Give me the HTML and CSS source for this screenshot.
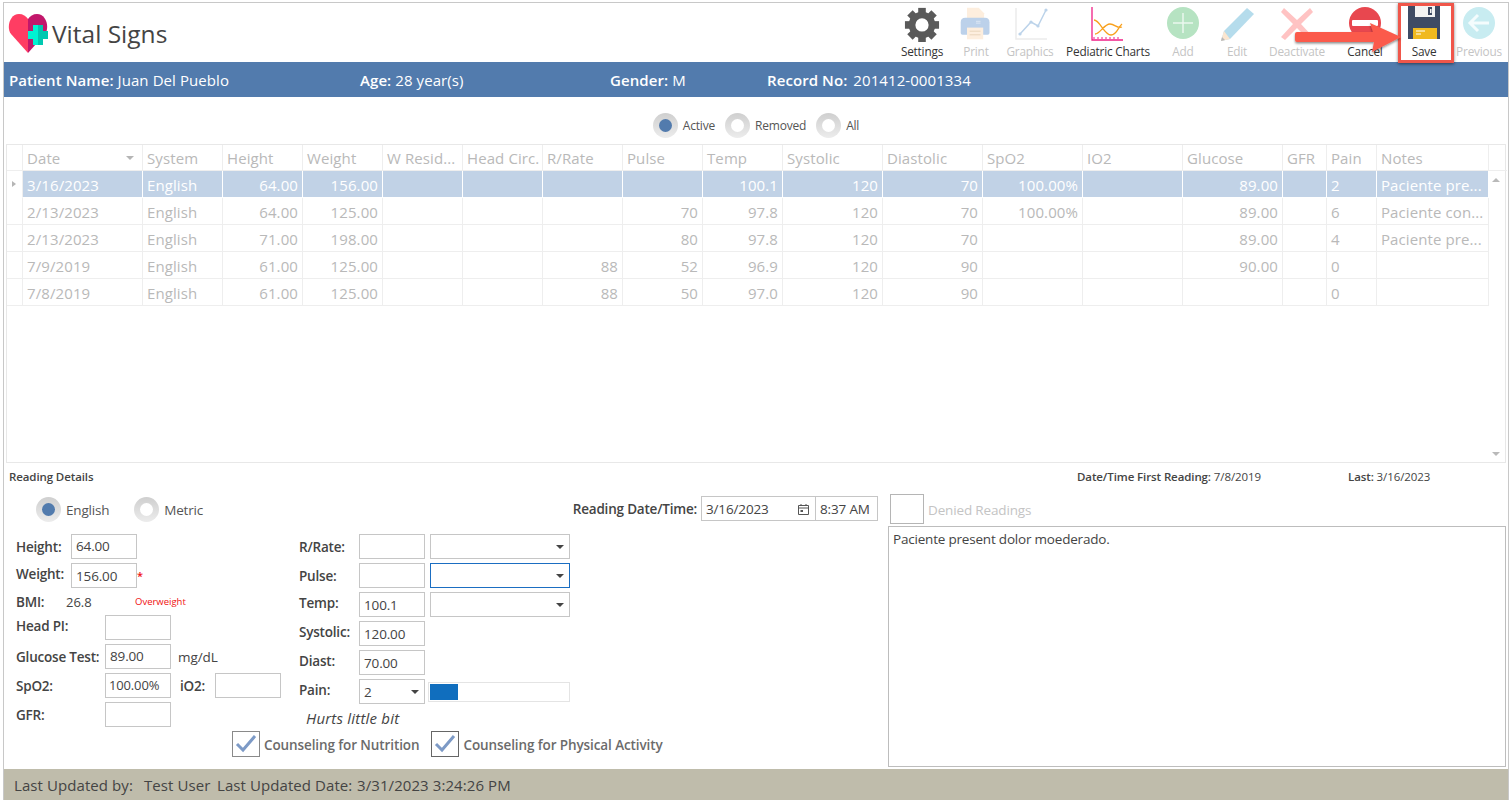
FILE: index.html
```html
<!DOCTYPE html>
<html lang="en">
<head>
<meta charset="utf-8">
<title>Vital Signs</title>
<link rel="stylesheet" href="styles.css">
</head>
<body>
<div class="frame">
  <header class="toolbar">
    <div class="brand">
      <svg class="logo" width="41" height="40" viewBox="0 0 41 40">
        <path d="M20 39 L3 20 C-2 13 2 0 11 0 C15 0 18 2 20 5 Z" fill="#ff3d63"/>
        <path d="M20 39 L37 20 C42 13 38 0 29 0 C25 0 22 2 20 5 Z" fill="#c2176b"/>
        <path d="M30 11h-5v6h-5v8h5v6h5z" fill="#00f2d2"/>
        <path d="M30 11h5v6h5v8h-5v6h-5z" fill="#00c9b1"/>
      </svg>
      <h1 class="title">Vital Signs</h1>
    </div>
    <nav class="tools">
      <div class="tool dark w54">
        <svg width="36" height="36" viewBox="-1 -2 38 38"><g fill="#5a5a5a"><rect x="14" y="0" width="8" height="7"/><rect x="14" y="29" width="8" height="7"/><rect x="0" y="14" width="7" height="8"/><rect x="29" y="14" width="7" height="8"/><rect x="14" y="0" width="8" height="7" transform="rotate(45 18 18)"/><rect x="14" y="29" width="8" height="7" transform="rotate(45 18 18)"/><rect x="0" y="14" width="7" height="8" transform="rotate(45 18 18)"/><rect x="29" y="14" width="7" height="8" transform="rotate(45 18 18)"/></g><circle cx="18" cy="18" r="10.5" fill="none" stroke="#5a5a5a" stroke-width="7"/></svg>
        <span>Settings</span>
      </div>
      <div class="tool w54">
        <svg width="36" height="36" viewBox="-1 -1 40 40"><path d="M9 1h13l6 6v9H9z" fill="#fdeede"/><path d="M2 17q0-5 5-5h22q5 0 5 5v12q0 2-2 2H4q-2 0-2-2z" fill="#bcd1ea"/><rect x="9" y="23" width="18" height="13" fill="#fdeede"/><path d="M12 27h12M12 31h12" stroke="#e8d3b8"/><path d="M19 16h5M19 18h5" stroke="#dfe9f5"/></svg>
        <span>Print</span>
      </div>
      <div class="tool w54">
        <svg width="36" height="36" viewBox="0 1 36 36"><path d="M4 3v31h31" fill="none" stroke="#ececec" stroke-width="1.5"/><path d="M8 29l11-12 7 4 8-16" fill="none" stroke="#bcd3ea" stroke-width="1.5"/><g fill="#bcd3ea"><circle cx="8" cy="29" r="1.6"/><circle cx="19" cy="17" r="1.6"/><circle cx="26" cy="21" r="1.6"/><circle cx="34" cy="5" r="1.6"/></g></svg>
        <span>Graphics</span>
      </div>
      <div class="tool dark w94">
        <svg width="36" height="36" viewBox="0 1 36 36"><path d="M2 2v33h31" fill="none" stroke="#f01f86" stroke-width="1.3"/><path d="M4 32v2M8 32v2M12 32v2M16 32v2M20 32v2M24 32v2M28 32v2" stroke="#f01f86"/><path d="M4 15c6 0 10 15 17 15 6 0 7-8 11-11M5 29c5 0 9-10 15-10 5 0 7 5 12 3" fill="none" stroke="#f8a01c" stroke-width="1.3"/></svg>
        <span>Pediatric Charts</span>
      </div>
      <div class="tool w54 gap1">
        <svg width="36" height="36" viewBox="0 1 36 36"><circle cx="18" cy="18" r="16" fill="#b6e3c2"/><path d="M18 8v20M8 18h20" stroke="#eaf8ee" stroke-width="1.5"/></svg>
        <span>Add</span>
      </div>
      <div class="tool w54">
        <svg width="36" height="36" viewBox="0 0 36 36"><path d="M28 2l7 6-24 25-9 2 3-10z" fill="#b5dcec"/><path d="M5 25l6 8-9 2z" fill="#fbe6d0"/><path d="M2 35l1-4 3 3z" fill="#b9b9b9"/></svg>
        <span>Edit</span>
      </div>
      <div class="tool w66">
        <svg width="36" height="36" viewBox="0 1 36 36"><path d="M5 3l13 12L31 3l3 4-12 12 12 13-4 3-12-12L6 35l-4-3 12-13L2 7z" fill="#ffc3c3"/></svg>
        <span>Deactivate</span>
      </div>
      <div class="tool dark w54 gap8">
        <svg width="36" height="36" viewBox="0 1 36 36"><circle cx="18" cy="18" r="16" fill="#e8474f"/><rect x="5" y="15" width="26" height="6" rx="1" fill="#fff"/></svg>
        <span>Cancel</span>
      </div>
      <div class="tool dark w54 gap5">
        <svg width="36" height="36" viewBox="0 1 36 36"><path d="M2 0h32v34H2z" fill="#3f4b64"/><rect x="9" y="0" width="20" height="12" fill="#f3f3f3"/><rect x="22" y="2" width="4" height="8" fill="#3f4b64"/><rect x="24" y="4" width="1.5" height="4" fill="#f3f3f3"/><rect x="7" y="23" width="24" height="11" fill="#f0b91f"/><path d="M10 26h9M10 29h5" stroke="#fff"/></svg>
        <span>Save</span>
      </div>
      <div class="tool w54 gap1">
        <svg width="36" height="36" viewBox="0 1 36 36"><circle cx="18" cy="18" r="16" fill="#c8ecf1"/><path d="M28 18H10M17 10l-8 8 8 8" fill="none" stroke="#f4fcfd" stroke-width="3"/></svg>
        <span>Previous</span>
      </div>
    </nav>
    <div class="save-mark"></div>
    <svg class="arrow" width="112" height="40" viewBox="0 0 112 40"><defs><filter id="sh" x="-10%" y="-20%" width="120%" height="150%"><feDropShadow dx="0" dy="1.5" stdDeviation="1.2" flood-color="#000" flood-opacity=".45"/></filter></defs><path d="M3 12q0-2 2-2h76l-3-9 31 14-29 15 2-10H5q-2 0-2-2z" fill="#fb5a4c" filter="url(#sh)"/></svg>
  </header>

  <section class="patient">
    <div class="p-item p1"><b>Patient Name:</b> Juan Del Pueblo</div>
    <div class="p-item p2"><b>Age:</b> 28 year(s)</div>
    <div class="p-item p3"><b>Gender:</b> M</div>
    <div class="p-item"><b>Record No:</b> <span class="rec">201412-0001334</span></div>
  </section>

  <div class="filters">
    <label class="radio"><i class="dot on"></i>Active</label>
    <label class="radio"><i class="dot"></i>Removed</label>
    <label class="radio"><i class="dot"></i>All</label>
  </div>

  <section class="grid">
    <div class="row head">
      <div></div><div class="sort">Date<i class="sort-caret"></i></div><div>System</div><div>Height</div><div>Weight</div><div>W Resid...</div><div>Head Circ.</div><div>R/Rate</div><div>Pulse</div><div>Temp</div><div>Systolic</div><div>Diastolic</div><div>SpO2</div><div>IO2</div><div>Glucose</div><div>GFR</div><div>Pain</div><div>Notes</div>
    </div>
    <div class="row sel">
      <div class="rh"><i class="rh-caret"></i></div><div>3/16/2023</div><div>English</div><div class="n">64.00</div><div class="n">156.00</div><div></div><div></div><div></div><div></div><div class="n">100.1</div><div class="n">120</div><div class="n">70</div><div class="n">100.00%</div><div></div><div class="n">89.00</div><div></div><div>2</div><div>Paciente pre...</div>
    </div>
    <div class="row">
      <div class="rh"></div><div>2/13/2023</div><div>English</div><div class="n">64.00</div><div class="n">125.00</div><div></div><div></div><div></div><div class="n">70</div><div class="n">97.8</div><div class="n">120</div><div class="n">70</div><div class="n">100.00%</div><div></div><div class="n">89.00</div><div></div><div>6</div><div>Paciente con...</div>
    </div>
    <div class="row">
      <div class="rh"></div><div>2/13/2023</div><div>English</div><div class="n">71.00</div><div class="n">198.00</div><div></div><div></div><div></div><div class="n">80</div><div class="n">97.8</div><div class="n">120</div><div class="n">70</div><div></div><div></div><div class="n">89.00</div><div></div><div>4</div><div>Paciente pre...</div>
    </div>
    <div class="row">
      <div class="rh"></div><div>7/9/2019</div><div>English</div><div class="n">61.00</div><div class="n">125.00</div><div></div><div></div><div class="n">88</div><div class="n">52</div><div class="n">96.9</div><div class="n">120</div><div class="n">90</div><div></div><div></div><div class="n">90.00</div><div></div><div>0</div><div></div>
    </div>
    <div class="row">
      <div class="rh"></div><div>7/8/2019</div><div>English</div><div class="n">61.00</div><div class="n">125.00</div><div></div><div></div><div class="n">88</div><div class="n">50</div><div class="n">97.0</div><div class="n">120</div><div class="n">90</div><div></div><div></div><div></div><div></div><div>0</div><div></div>
    </div>
    <i class="scroll-up"></i>
    <i class="scroll-down"></i>
  </section>

  <div class="details-head">
    <b class="dh-title">Reading Details</b>
    <span class="dh-first"><b>Date/Time First Reading:</b> 7/8/2019</span>
    <span class="dh-last"><b>Last:</b> 3/16/2023</span>
  </div>

  <section class="details">
    <div class="form">
      <div class="form-top">
        <div class="units">
          <label class="radio big"><i class="dot on"></i>English</label>
          <label class="radio big"><i class="dot"></i>Metric</label>
        </div>
        <div class="when">
          <span class="lbl">Reading Date/Time:</span>
          <div class="box date">3/16/2023<svg width="13" height="13" viewBox="0 0 13 13"><path d="M1.500 2.500h10v9h-10zM1.500 5h10M4 1v2M9 1v2" fill="none" stroke="#555"/><rect x="3.500" y="7" width="2.500" height="2" fill="#555"/></svg></div>
          <div class="box time">8:37 AM</div>
        </div>
      </div>
      <div class="cols">
        <div class="col-left">
          <div class="f"><span class="lbl w55">Height:</span><div class="box">64.00</div></div>
          <div class="f"><span class="lbl w55 up">Weight:</span><div class="box low">156.00</div><span class="req">*</span></div>
          <div class="f bmi"><span class="lbl w50">BMI:</span><span class="val">26.8</span><span class="over">Overweight</span></div>
          <div class="f"><span class="lbl w89 up">Head PI:</span><div class="box"></div></div>
          <div class="f"><span class="lbl w89">Glucose Test:</span><div class="box">89.00</div><span class="unit">mg/dL</span></div>
          <div class="f"><span class="lbl w89">SpO2:</span><div class="box tight">100.00%</div><span class="lbl io">iO2:</span><div class="box"></div></div>
          <div class="f"><span class="lbl w89">GFR:</span><div class="box"></div></div>
        </div>
        <div class="col-mid">
          <div class="f"><span class="lbl w60">R/Rate:</span><div class="box"></div><div class="box sel-box"><i class="caret"></i></div></div>
          <div class="f"><span class="lbl w60">Pulse:</span><div class="box"></div><div class="box sel-box focus"><i class="caret"></i></div></div>
          <div class="f"><span class="lbl w60 up">Temp:</span><div class="box low">100.1</div><div class="box sel-box"><i class="caret"></i></div></div>
          <div class="f"><span class="lbl w60 up">Systolic:</span><div class="box low">120.00</div></div>
          <div class="f"><span class="lbl w60 up">Diast:</span><div class="box low">70.00</div></div>
          <div class="f"><span class="lbl w60 up">Pain:</span><div class="box low pain">2<i class="caret"></i></div><div class="meter"><div class="meter-fill"></div></div></div>
          <div class="hurts">Hurts little bit</div>
        </div>
      </div>
      <div class="checks">
        <label class="check"><svg class="cb" width="28" height="26" viewBox="0 0 28 26"><rect x=".5" y=".5" width="27" height="25" fill="#fff" stroke="#8a8a8a"/><path d="M5 13l6 6L23 5" fill="none" stroke="#7d9ac6" stroke-width="3"/></svg><span class="cl">Counseling for Nutrition</span></label>
        <label class="check"><svg class="cb" width="28" height="26" viewBox="0 0 28 26"><rect x=".5" y=".5" width="27" height="25" fill="#fff" stroke="#666"/><path d="M5 13l6 6L23 5" fill="none" stroke="#7d9ac6" stroke-width="3"/></svg><span class="cl">Counseling for Physical Activity</span></label>
      </div>
    </div>
    <div class="side">
      <div class="denied"><div class="denied-box"></div><span>Denied Readings</span></div>
      <div class="notes">Paciente present dolor moederado.</div>
    </div>
  </section>

  <footer class="status">
    <span class="s1">Last Updated by:</span><span class="s2">Test User</span><span class="s3">Last Updated Date:</span><span>3/31/2023 3:24:26 PM</span>
  </footer>
</div>
</body>
</html>
```
FILE: styles.css
```css
* { box-sizing: border-box; }
html, body { margin: 0; padding: 0; background: #fff; }
body { font-family: "Open Sans", "Noto Sans", sans-serif; color: #444; overflow: hidden; }
b { font-weight: 600; }
i { font-style: normal; display: block; }

.frame { width: 1506px; height: 798px; margin: 2px 0 0 3px; border: 1px solid #c8c8c8; border-bottom: 0; display: flex; flex-direction: column; position: relative; }

.toolbar { height: 59px; display: flex; justify-content: space-between; position: relative; flex: none; }
.brand { display: flex; align-items: center; padding: 3px 0 0 4px; height: 59px; }
.logo { flex: none; margin-top: -1px; }
.title { margin: 0 0 0 3px; font-size: 24.500px; font-weight: 400; color: #444; white-space: nowrap; line-height: 30px; }
.tools { display: flex; align-items: flex-start; padding-right: 2px; }
.tool { display: flex; flex-direction: column; align-items: center; font-size: 11.800px; color: #c4c4c4; height: 59px; padding-top: 3px; white-space: nowrap; letter-spacing: -.2px; }
.tool svg { flex: none; }
.tool span { line-height: 16px; margin-top: 1px; }
.tool.dark { color: #333; }
.w54 { width: 54px; }
.w66 { width: 66px; }
.w94 { width: 94px; margin-left: 4px; }
.gap8 { margin-left: 8px; }
.gap5 { margin-left: 5px; }
.gap1 { margin-left: 1px; }

.save-mark { position: absolute; left: 1394px; top: 0; width: 56px; height: 60px; border: 3px solid #f0564a; box-shadow: 0 1px 3px rgba(0,0,0,.5); }
.arrow { position: absolute; left: 1288px; top: 19px; }

.patient { height: 35px; background: #527bad; color: #fff; display: flex; align-items: center; padding-left: 5px; font-size: 15px; flex: none; letter-spacing: .08px; }
.p-item { white-space: nowrap; }
.p1 { width: 351px; }
.p2 { width: 250px; }
.p3 { width: 157px; }
.rec { margin-left: 2px; }

.filters { height: 47px; padding-top: 15px; display: flex; justify-content: center; gap: 10px; flex: none; }
.radio { display: flex; align-items: center; gap: 5px; font-size: 12px; color: #555; height: 26px; letter-spacing: -.2px; }
.dot { width: 25px; height: 25px; border-radius: 50%; background: linear-gradient(#cfcfcf, #ececec); display: flex; align-items: center; justify-content: center; }
.dot::after { content: ""; width: 13px; height: 13px; border-radius: 50%; background: #fff; }
.dot.on::after { background: #527bad; }

.grid { height: 319px; margin: 0 2px 0 2px; border: 1px solid #e8e8e8; position: relative; flex: none; color: #b9b9b9; }
.row { display: grid; grid-template-columns: 16px 120px 80px 80px 80px 80px 80px 80px 80px 80px 100px 100px 100px 100px 100px 44px 50px 112px; height: 27px; font-size: 15px; line-height: 29px; letter-spacing: .1px; }
.row > div { border-right: 1px solid #eee; border-bottom: 1px solid #eee; padding: 0 4px; white-space: nowrap; overflow: hidden; position: relative; }
.row.head { height: 26px; line-height: 27px; width: 1498px; grid-template-columns: 16px 120px 80px 80px 80px 80px 80px 80px 80px 80px 100px 100px 100px 100px 100px 44px 50px 112px 18px; }
.row.head::after { content: ""; border-bottom: 1px solid #eee; }
.row .n { text-align: right; }
.row.sel > div { background: #c1d2e6; color: #fff; border-right-color: #fff; border-bottom-color: #fff; }
.row.sel > .rh { background: #fff; border-right-color: #eee; }
.rh-caret { position: absolute; left: 5px; top: 10px; border-left: 4px solid #b5b5b5; border-top: 3.5px solid transparent; border-bottom: 3.5px solid transparent; }
.sort-caret { position: absolute; right: 8px; top: 11px; border-top: 4px solid #b5b5b5; border-left: 4px solid transparent; border-right: 4px solid transparent; }
.scroll-up { position: absolute; right: 5px; top: 33px; border-bottom: 4px solid #b9b9b9; border-left: 4px solid transparent; border-right: 4px solid transparent; }
.scroll-down { position: absolute; right: 5px; bottom: 6px; border-top: 4px solid #b9b9b9; border-left: 4px solid transparent; border-right: 4px solid transparent; }

.details-head { height: 27px; display: flex; align-items: center; font-size: 11.500px; color: #444; padding: 0 0 1px 5px; flex: none; white-space: nowrap; letter-spacing: -.1px; }
.dh-title { width: 1068px; }
.dh-first { width: 271px; }

.details { display: flex; flex: 1; min-height: 0; }
.form { width: 884px; flex: none; padding-left: 12px; }
.form-top { height: 44px; display: flex; justify-content: space-between; align-items: flex-start; padding-right: 10px; padding-top: 6px; }
.units { display: flex; gap: 25px; padding-left: 20px; }
.radio.big { font-size: 13.500px; gap: 5px; padding-top: 1px; }
.when { display: flex; align-items: center; margin-top: 0; }
.when .lbl { margin-right: 4px; padding-top: 1px; }
.lbl { font-size: 13.500px; font-weight: 600; color: #444; white-space: nowrap; letter-spacing: -.2px; flex: none; }
.box { width: 66px; height: 25px; border: 1px solid #c6c6c6; font-size: 13.500px; color: #444; padding: 0 4px; line-height: 23px; flex: none; white-space: nowrap; position: relative; background: #fff; letter-spacing: -.15px; }
.box.low { line-height: 25px; }
.box.tight { padding: 0 3px; font-size: 13px; }
.date { width: 115px; display: flex; align-items: center; justify-content: space-between; padding-top: 1px; }
.date svg { flex: none; margin-right: 1px; }
.time { width: 62px; margin-left: 0; border-left: 0; line-height: 24px; }

.cols { display: flex; height: 193px; }
.col-left { width: 283px; display: flex; flex-direction: column; gap: 4px; flex: none; }
.col-mid { display: flex; flex-direction: column; gap: 4px; }
.f { display: flex; align-items: center; height: 25px; flex: none; }
.f.bmi { height: 19px; }
.up { margin-bottom: 4px; }
.w50 { width: 50px; }
.w55 { width: 55px; }
.w60 { width: 60px; }
.w89 { width: 89px; }
.val { font-size: 13px; width: 69px; color: #444; }
.over { font-size: 9.500px; color: #f01010; white-space: nowrap; }
.req { color: #f01010; font-size: 11px; line-height: 14px; font-weight: 600; }
.unit { font-size: 13.500px; margin-left: 7px; letter-spacing: -.1px; }
.io { margin-left: 9px; width: 35px; }
.sel-box { width: 140px; margin-left: 5px; }
.focus { border-color: #1b6ec2; }
.caret { position: absolute; right: 5px; top: 10px; border-top: 4px solid #444; border-left: 4px solid transparent; border-right: 4px solid transparent; }
.meter { width: 142px; height: 20px; margin-left: 3px; border: 1px solid #e4e4e4; padding: 1px; background: #fff; }
.meter-fill { width: 28px; height: 100%; background: #106ebe; }
.hurts { font-style: italic; font-size: 15px; color: #444; margin-left: 7px; line-height: 20px; letter-spacing: .2px; }

.checks { display: flex; gap: 12px; padding-left: 216px; margin-top: 4px; }
.check { display: flex; align-items: center; gap: 4px; font-size: 13.500px; font-weight: 600; color: #6b6b6b; letter-spacing: -.1px; white-space: nowrap; }
.cl { padding-top: 1px; }
.cb { flex: none; }

.side { flex: 1; display: flex; flex-direction: column; padding-right: 2px; }
.denied { display: flex; align-items: center; height: 36px; margin-left: 2px; flex: none; padding-top: 2px; }
.denied-box { width: 34px; height: 30px; border: 1px solid #b5b5b5; flex: none; }
.denied span { font-size: 13.500px; color: #c4c4c4; margin-left: 4px; letter-spacing: -.15px; padding-top: 1px; }
.notes { height: 241px; border: 1px solid #bdbdbd; font-size: 13.500px; padding: 3px 4px; color: #444; flex: none; letter-spacing: -.2px; }

.status { height: 31px; background: #bfbcab; display: flex; align-items: center; padding-left: 10px; font-size: 15px; color: #444; flex: none; white-space: nowrap; letter-spacing: .08px; }
.s1 { width: 130px; }
.s2 { width: 73px; }
.s3 { width: 140px; }
```
